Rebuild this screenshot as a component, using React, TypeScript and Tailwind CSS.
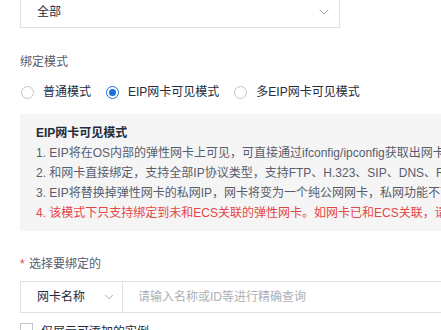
import { ChevronDown } from "lucide-react";

const FONT = { fontFamily: '"Liberation Sans", "Noto Sans CJK SC", sans-serif' };

function Radio({ label, checked }: { label: string; checked?: boolean }) {
    return (
        <label className="flex items-center gap-[9px]">
            <span
                className={
                    checked
                        ? "flex h-[13px] w-[13px] items-center justify-center rounded-full border border-[#1a6fdc] bg-white"
                        : "h-[13px] w-[13px] rounded-full border border-[#c2c5cc] bg-white"
                }
            >
                {checked && <span className="h-[7px] w-[7px] rounded-full bg-[#1a6fdc]" />}
            </span>
            <span className="text-[12px] text-[#252b3a]">{label}</span>
        </label>
    );
}

function App() {
    return (
        <div className="h-[330px] w-[441px] overflow-hidden bg-white pl-5" style={FONT}>
            <div className="-mt-[5px] flex h-[33px] w-[320px] items-center justify-between border border-[#dfe1e6] pl-4 pr-[7px]">
                <span className="text-[12px] text-[#252b3a]">全部</span>
                <ChevronDown className="h-[16px] w-[16px] text-[#8a8e99]" strokeWidth={1.3} />
            </div>

            <div className="mt-[24px] text-[12px] leading-5 text-[#575d6c]">绑定模式</div>

            <div className="mt-[10px] flex h-5 items-center gap-[15px] pl-px">
                <Radio label="普通模式" />
                <Radio label="EIP网卡可见模式" checked />
                <Radio label="多EIP网卡可见模式" />
            </div>

            <div className="mt-[12px] h-[117px] whitespace-nowrap bg-[#f5f5f6] pb-2 pl-4 pt-[9px] text-[12px] leading-5 text-[#575d6c]">
                <div className="font-bold text-[#252b3a]">EIP网卡可见模式</div>
                <div>1. EIP将在OS内部的弹性网卡上可见，可直接通过ifconfig/ipconfig获取出网卡信息。</div>
                <div>2. 和网卡直接绑定，支持全部IP协议类型，支持FTP、H.323、SIP、DNS、RTSP、TFTP等协议的ALG能力。</div>
                <div>3. EIP将替换掉弹性网卡的私网IP，网卡将变为一个纯公网网卡，私网功能不可用。</div>
                <div className="text-[#e54545]">4. 该模式下只支持绑定到未和ECS关联的弹性网卡。如网卡已和ECS关联，请先解绑。</div>
            </div>

            <div className="mt-[23px] flex items-center text-[12px] leading-5 text-[#575d6c]">
                <span className="w-[9px] text-[#e54545]">*</span>
                <span>选择要绑定的</span>
            </div>

            <div className="mt-[7px] flex h-[32px] w-[460px] border border-[#dfe1e6]">
                <div className="flex w-[102px] shrink-0 items-center gap-[17px] border-r border-[#dfe1e6] pl-4">
                    <span className="text-[12px] text-[#252b3a]">网卡名称</span>
                    <ChevronDown className="h-[14px] w-[14px] text-[#8a8e99]" strokeWidth={1.3} />
                </div>
                <div className="flex items-center pl-[15px] text-[12px] text-[#adb0b8]">请输入名称或ID等进行精确查询</div>
            </div>

            <div className="mt-[9px] flex items-start gap-2">
                <span className="mt-px h-[13px] w-[13px] border border-[#c2c5cc] bg-white" />
                <span className="text-[12px] leading-5 text-[#252b3a]">仅展示可添加的实例</span>
            </div>
        </div>
    );
}

export default App;
